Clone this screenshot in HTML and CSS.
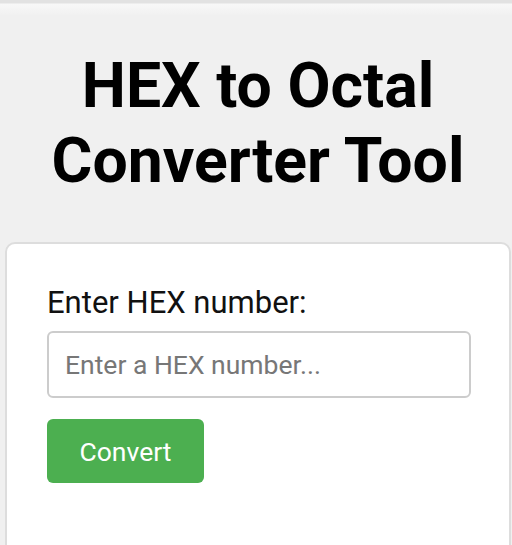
FILE: index.html
```html
<!DOCTYPE html>
<html lang="en">
<head>
    <meta charset="UTF-8">
    <meta name="viewport" content="width=device-width, initial-scale=1.0">
    <title>HEX to Octal Converter Tool</title>
    <link rel="stylesheet" href="styles.css">
</head>
<body>
    <h1 class="titulo">HEX to Octal Converter Tool</h1>

    <div class="tarjeta">
        <label for="hexInput" class="etiqueta">Enter HEX number:</label>
        <input type="text" id="hexInput" class="entrada" placeholder="Enter a HEX number...">
        <button id="convertir" class="boton">Convert</button>
        <p id="resultado" class="resultado"></p>
    </div>

    <script>
        document.getElementById("convertir").addEventListener("click", function() {
            let valor = document.getElementById("hexInput").value.trim();
            let salida = document.getElementById("resultado");
            if (!/^[0-9a-fA-F]+$/.test(valor)) {
                salida.innerText = "Please enter a valid HEX number.";
                return;
            }
            salida.innerText = "Octal: " + parseInt(valor, 16).toString(8);
        });
    </script>
</body>
</html>
```

FILE: styles.css
```css
html {
    background-color: #f0f0f0;
}

body {
    margin: 0;
    padding: 48px 1px 0 5px;
    font-family: Roboto, "Liberation Sans", Arial, sans-serif;
    background: linear-gradient(#e2e2e2 0, #e2e2e2 3px, #f8f8f8 4px, #f0f0f0 16px) no-repeat;
    background-color: #f0f0f0;
    height: 545px;
    overflow: hidden;
    box-sizing: border-box;
}

.titulo {
    margin: 0 0 44px 0;
    padding: 0 30px;
    font-size: 62.5px;
    font-weight: bold;
    line-height: 75px;
    text-align: center;
    color: #000;
}

.tarjeta {
    background-color: #fff;
    border: 2px solid #ddd;
    border-radius: 10px;
    padding: 40px 38px 60px 40px;
    height: 400px;
}

.etiqueta {
    display: block;
    font-size: 31px;
    color: #111;
    margin-bottom: 10px;
}

.entrada {
    display: block;
    width: 100%;
    box-sizing: border-box;
    height: 67px;
    padding: 0 16px;
    border: 2px solid #ccc;
    border-radius: 6px;
    font-family: inherit;
    font-size: 26.5px;
    color: #333;
    margin-bottom: 21px;
}

.entrada::placeholder {
    color: #777;
}

.boton {
    display: block;
    width: 157px;
    height: 64px;
    background-color: #4caf50;
    color: #fff;
    border: none;
    border-radius: 6px;
    font-family: inherit;
    font-size: 26.5px;
    cursor: pointer;
}

.resultado {
    font-size: 24px;
}
```
